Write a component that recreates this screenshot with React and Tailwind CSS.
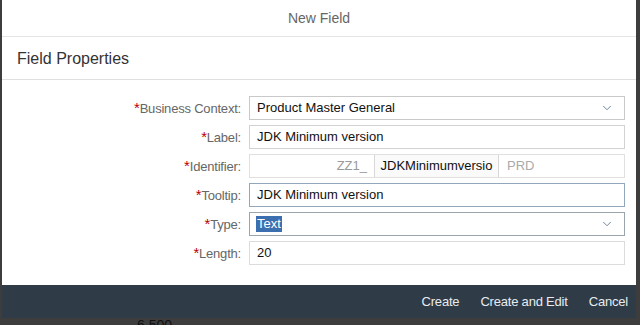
import { ChevronDown } from 'lucide-react'

const font = { fontFamily: '"Liberation Sans", Arial, sans-serif' }

function Label({ children }) {
  return (
    <div className="w-[247px] shrink-0 pr-[8px] text-right text-[13px] tracking-[-0.2px] text-[#666]">
      <span className="text-[15px] text-[#bb0000]">*</span>
      {children}
    </div>
  )
}

function Row({ label, children }) {
  return (
    <div className="flex items-center h-[24px]">
      <Label>{label}</Label>
      <div className="w-[376px]">{children}</div>
    </div>
  )
}

export default function App() {
  return (
    <div className="w-[640px] h-[325px] bg-[#3d3d3d] overflow-hidden relative" style={font}>
      <div className="ml-[2px] mr-[4px] h-[318px] bg-white flex flex-col">
        {/* Header */}
        <div className="h-[37px] flex items-center justify-center border-b border-[#e5e5e5] text-[14px] text-[#666]">
          New Field
        </div>
        <div className="h-[43px] flex items-center px-[15px] pt-[2px] border-b border-[#e0e0e0] text-[16px] text-[#333]">
          Field Properties
        </div>

        {/* Form */}
        <div className="flex-1 flex flex-col gap-[5px] pt-[16px]">
          <Row label="Business Context:">
            <div className="h-[24px] border border-[#c9c9c9] flex items-center justify-between pl-[7px] pr-[10px] text-[13px] text-[#111]">
              <span>Product Master General</span>
              <ChevronDown className="w-[14px] h-[14px] text-[#5b738b]" strokeWidth={1.5} />
            </div>
          </Row>
          <Row label="Label:">
            <div className="h-[24px] border border-[#d2d2d2] flex items-center pl-[7px] text-[13px] text-[#111]">
              JDK Minimum version
            </div>
          </Row>
          <Row label="Identifier:">
            <div className="h-[24px] border border-[#e0e0e0] flex text-[13px]">
              <div className="w-[124px] flex items-center justify-end pr-[7px] text-[#999]">ZZ1_</div>
              <div className="w-[125px] border-x border-[#d8d8d8] bg-[#fafafa] flex items-center justify-center text-[#111]">
                JDKMinimumversio
              </div>
              <div className="flex items-center pl-[8px] text-[#aaa]">PRD</div>
            </div>
          </Row>
          <Row label="Tooltip:">
            <div className="h-[24px] border border-[#93a7bb] flex items-center pl-[7px] text-[13px] text-[#111]">
              JDK Minimum version
            </div>
          </Row>
          <Row label="Type:">
            <div className="h-[24px] border border-[#9aa4ad] flex items-center justify-between pl-[6px] pr-[10px] text-[13px]">
              <span className="bg-[#3b6fb0] text-white px-[1px] leading-[16px]">Text</span>
              <ChevronDown className="w-[14px] h-[14px] text-[#5b738b]" strokeWidth={1.5} />
            </div>
          </Row>
          <Row label="Length:">
            <div className="h-[24px] border border-[#dcdcdc] flex items-center pl-[7px] text-[13px] text-[#111]">
              20
            </div>
          </Row>
        </div>

        {/* Footer */}
        <div className="h-[33px] bg-[#2f3b47] flex items-center justify-end gap-[21px] pr-[8px] text-[13px] tracking-[-0.2px] text-[#e8ecef]">
          <span>Create</span>
          <span>Create and Edit</span>
          <span>Cancel</span>
        </div>
      </div>
      <div className="absolute left-[137px] top-[315px] text-[14px] text-[#111]">6,500</div>
    </div>
  )
}
